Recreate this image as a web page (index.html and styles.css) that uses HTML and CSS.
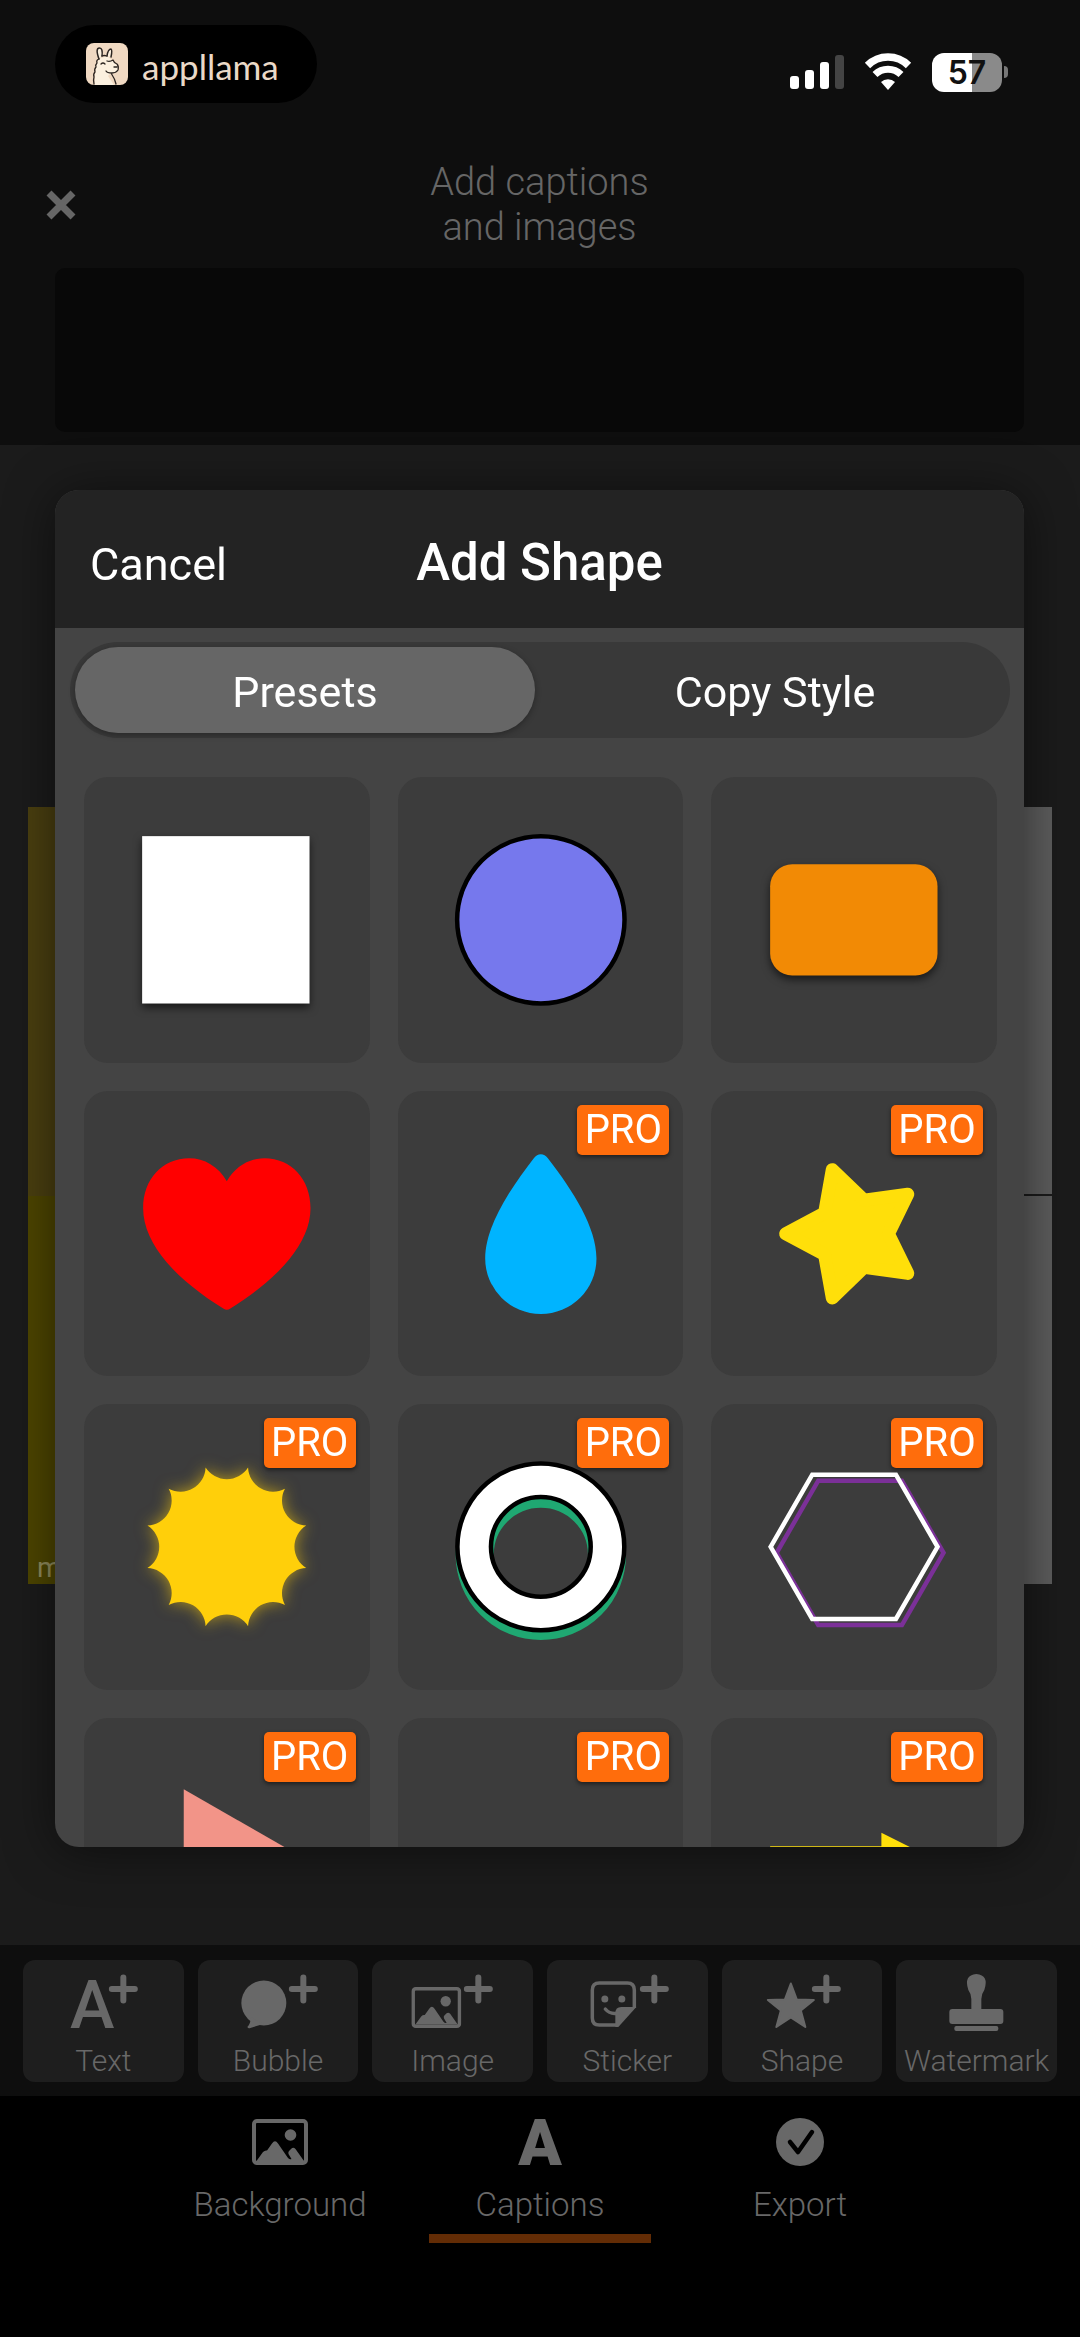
FILE: index.html
```html
<!DOCTYPE html>
<html lang="en">
<head>
    <meta charset="UTF-8">
    <meta name="viewport" content="width=device-width, initial-scale=1.0">
    <title>Add Shape</title>
    <link rel="stylesheet" href="styles.css">
</head>
<body>
    <!-- Shared icons -->
    <svg class="icon-defs" aria-hidden="true">
        <symbol id="plus" viewBox="0 0 30 30">
            <path d="M15 3.500v23M3.500 15h23" stroke="currentColor" stroke-width="6" stroke-linecap="round"/>
        </symbol>
        <symbol id="picture" viewBox="0 0 56 46">
            <rect x="2" y="2" width="52" height="42" rx="3" fill="none" stroke="currentColor" stroke-width="4"/>
            <circle cx="38.500" cy="16" r="5.800" fill="currentColor"/>
            <path d="M4.500 42 11 33q2-2 4-1.500l5-7q3-4.500 6 0L36 39q2 2 3.500 1l-3-5q-.500-2 .500-3l2.500-2.500q2-1.500 4 .500L52 42z" fill="currentColor"/>
        </symbol>
    </svg>

    <div class="app">
        <!-- Top Section -->
        <header class="top">
            <div class="status">
                <div class="pill">
                    <svg class="llama" viewBox="0 0 42 42" aria-hidden="true">
                        <rect width="42" height="42" rx="8" fill="#f0d9c2"/>
                        <path d="M9 42V31l1-6 1-5 2-4 8-3 6 5 5 5q1 6-5 7l-3 1-2 2 6 9z" fill="#fbf0df"/>
                        <path d="M13 16Q9 5 13.500 5 17 5 16 13M21 13q1-7 4-7 1.500 1 0 8" fill="#fbf0df" stroke="#2b2420" stroke-width="1.500" stroke-linecap="round"/>
                        <path d="M13 16q-3 1-2 4-2 2-1 4-2 2-1 5-2 2-1 5-1 3 0 7M16 13q2-1 5 0M21 18q3 1 6-1 1 3 4 4 2 2 1 6-2 3-6 3-5 0-6-2M25 30q4 6 5 11M15 21q2-2 4 0M28 24h3" fill="none" stroke="#2b2420" stroke-width="1.300" stroke-linecap="round" stroke-linejoin="round"/>
                    </svg>
                    <span class="pill-text">appllama</span>
                </div>
                <div class="indicators">
                    <svg class="signal" viewBox="0 0 54 36" aria-hidden="true">
                        <rect x="0" y="22" width="9" height="13" rx="3" fill="#fff"/>
                        <rect x="15" y="16" width="9" height="19" rx="3" fill="#fff"/>
                        <rect x="30" y="8" width="9" height="27" rx="3" fill="#fff"/>
                        <rect x="45" y="1" width="9" height="34" rx="3" fill="#444"/>
                    </svg>
                    <svg class="wifi" viewBox="0 0 48 36" aria-hidden="true">
                        <path d="M3.500 11.500a29 29 0 0 1 41 0" fill="none" stroke="#fff" stroke-width="7.500"/>
                        <path d="M11 20.500a18.500 18.500 0 0 1 26 0" fill="none" stroke="#fff" stroke-width="7"/>
                        <path d="M24 36l-7-8a10 10 0 0 1 14 0z" fill="#fff"/>
                    </svg>
                    <div class="battery"><span class="battery-level">57</span></div>
                </div>
            </div>
            <div class="titlebar">
                <button class="close" aria-label="Close">
                    <svg viewBox="0 0 32 32" aria-hidden="true"><path d="M4 4l24 24M28 4L4 28" stroke="currentColor" stroke-width="7"/></svg>
                </button>
                <h1 class="page-title">Add captions<br>and images</h1>
            </div>
            <div class="ad"></div>
        </header>

        <!-- Meme Canvas -->
        <main class="stage">
            <div class="meme">
                <div class="panel yellow-dark"></div>
                <div class="panel grey"></div>
                <div class="panel yellow">m</div>
                <div class="panel grey"></div>
            </div>
        </main>

        <!-- Caption Tools -->
        <div class="tools">
            <button class="tool">
                <svg viewBox="0 0 160 64" aria-hidden="true">
                    <text x="69" y="61" text-anchor="middle" font-size="67" fill="currentColor">A</text>
                    <use href="#plus" x="85" y="7" width="30" height="30"/>
                </svg>
                <span>Text</span>
            </button>
            <button class="tool">
                <svg viewBox="0 0 160 64" aria-hidden="true">
                    <circle cx="65.500" cy="36" r="22.500" fill="currentColor"/>
                    <path d="M52 50q1 6-3 10 1 2 3 1l13-4z" fill="currentColor"/>
                    <use href="#plus" x="90" y="7" width="30" height="30"/>
                </svg>
                <span>Bubble</span>
            </button>
            <button class="tool">
                <svg viewBox="0 0 160 64" aria-hidden="true">
                    <use href="#picture" x="39" y="20" width="50" height="41"/>
                    <use href="#plus" x="91" y="7" width="30" height="30"/>
                </svg>
                <span>Image</span>
            </button>
            <button class="tool">
                <svg viewBox="0 0 160 64" aria-hidden="true">
                    <path d="M70 58H52q-7 0-7-7V23q0-7 7-7h28q7 0 7 7v18" fill="none" stroke="currentColor" stroke-width="3.500"/>
                    <path d="M68 60V46q0-6 6-6h15L71 60z" fill="currentColor"/>
                    <circle cx="57.500" cy="32" r="3.500" fill="currentColor"/>
                    <circle cx="74.500" cy="32" r="3.500" fill="currentColor"/>
                    <path d="M58 42q5 6 13 4" fill="none" stroke="currentColor" stroke-width="3.500" stroke-linecap="round"/>
                    <use href="#plus" x="92" y="7" width="30" height="30"/>
                </svg>
                <span>Sticker</span>
            </button>
            <button class="tool">
                <svg viewBox="0 0 160 64" aria-hidden="true">
                    <path d="M68.500 16.500 74.500 32.500 91.500 33 78.500 43.500 83 60 68.500 50.500 54 60 58.500 43.500 45.500 33 62.500 32.500z" fill="currentColor" stroke="currentColor" stroke-width="2" stroke-linejoin="round"/>
                    <use href="#plus" x="89" y="7" width="30" height="30"/>
                </svg>
                <span>Shape</span>
            </button>
            <button class="tool">
                <svg viewBox="0 0 160 64" aria-hidden="true">
                    <path d="M75 42V32q0-5-3-9-5-15 8-16 13 1 8 16-3 4-3 9v10h19q3 0 3 3v9q0 3-3 3H56q-3 0-3-3v-9q0-3 3-3z" fill="currentColor"/>
                    <rect x="58" y="59" width="44" height="5" rx="2" fill="currentColor"/>
                </svg>
                <span>Watermark</span>
            </button>
        </div>

        <!-- Bottom Tabs -->
        <nav class="tabs">
            <button class="tab">
                <svg viewBox="0 0 56 48" aria-hidden="true"><use href="#picture" x="0" y="1" width="56" height="46"/></svg>
                <span>Background</span>
            </button>
            <button class="tab active">
                <svg viewBox="0 0 56 48" aria-hidden="true"><text x="28" y="47" text-anchor="middle" font-size="64" font-weight="900" fill="currentColor">A</text></svg>
                <span>Captions</span>
            </button>
            <button class="tab">
                <svg viewBox="0 0 56 48" aria-hidden="true">
                    <circle cx="28" cy="24" r="24" fill="currentColor"/>
                    <path d="M18 24l8 10 14-20" fill="none" stroke="#000" stroke-width="4.500" stroke-linecap="round" stroke-linejoin="round"/>
                </svg>
                <span>Export</span>
            </button>
        </nav>
    </div>

    <!-- Add Shape Dialog -->
    <div class="overlay">
        <div class="dialog" role="dialog" aria-labelledby="dialog-title">
            <div class="dialog-head">
                <button class="cancel">Cancel</button>
                <h2 class="dialog-title" id="dialog-title">Add Shape</h2>
            </div>
            <div class="segments">
                <button class="segment selected">Presets</button>
                <button class="segment">Copy Style</button>
            </div>
            <div class="shapes">
                <button class="shape" aria-label="Square">
                    <svg viewBox="0 0 285 285"><rect class="drop" x="58" y="59" width="167" height="167" fill="#fff"/></svg>
                </button>
                <button class="shape" aria-label="Circle">
                    <svg viewBox="0 0 285 285"><circle cx="142.500" cy="142.500" r="83.500" fill="#7678ed" stroke="#000" stroke-width="4.500"/></svg>
                </button>
                <button class="shape" aria-label="Rounded rectangle">
                    <svg viewBox="0 0 285 285"><rect class="drop" x="59" y="87" width="167" height="111" rx="22" fill="#f28a05"/></svg>
                </button>
                <button class="shape" aria-label="Heart">
                    <svg viewBox="0 0 285 285"><path d="M142.500 90C134 75 120 67 105 67 78 67 59 88 59 117c0 37 36 73 80 100q3.500 2.500 7 0c44-27 80-63 80-100 0-29-19-50-46-50-15 0-29 8-37.500 23z" fill="#f00"/></svg>
                </button>
                <button class="shape" aria-label="Drop">
                    <svg viewBox="0 0 285 285"><path d="M142.500 63q4 0 7 4C175 100 198 136 198 167a55.500 55.500 0 0 1-111 0c0-31 23-67 48.500-100q3-4 7-4z" fill="#00b4ff"/></svg>
                    <span class="pro">PRO</span>
                </button>
                <button class="shape" aria-label="Star">
                    <svg viewBox="0 0 285 285"><path d="M74.500 142.500 113.300 121.800 121 78.500 152.700 109 196.300 103 177 142.500 196.300 182 152.700 176 121 206.500 113.300 163.200z" fill="#ffdf0a" stroke="#ffdf0a" stroke-width="13" stroke-linejoin="round"/></svg>
                    <span class="pro">PRO</span>
                </button>
                <button class="shape" aria-label="Sun">
                    <svg viewBox="0 0 285 285"><path class="glow" d="M163.700 63.300A25 25 0 0 0 200.500 84.500 25 25 0 0 0 221.700 121.300 25 25 0 0 0 221.700 163.700 25 25 0 0 0 200.500 200.500 25 25 0 0 0 163.700 221.700 25 25 0 0 0 121.300 221.700 25 25 0 0 0 84.500 200.500 25 25 0 0 0 63.300 163.700 25 25 0 0 0 63.300 121.300 25 25 0 0 0 84.500 84.500 25 25 0 0 0 121.300 63.300 25 25 0 0 0 163.700 63.300z" fill="#ffcf0a"/></svg>
                    <span class="pro">PRO</span>
                </button>
                <button class="shape" aria-label="Ring">
                    <svg viewBox="0 0 285 285" fill="none">
                        <circle cx="142.500" cy="150.500" r="66" stroke="#1fa872" stroke-width="38"/>
                        <circle cx="142.500" cy="142.500" r="66.500" stroke="#000" stroke-width="38"/>
                        <circle cx="142.500" cy="142.500" r="66.500" stroke="#fff" stroke-width="29"/>
                    </svg>
                    <span class="pro">PRO</span>
                </button>
                <button class="shape" aria-label="Hexagon">
                    <svg viewBox="0 0 285 285" fill="none" stroke-width="4.500">
                        <path d="M65.500 148.500 107 76.500H190.500L232 148.500 190.500 220.500H107z" stroke="#7b3098"/>
                        <path d="M59.500 142.500 101 70.500H184.500L226 142.500 184.500 214.500H101z" stroke="#fff"/>
                    </svg>
                    <span class="pro">PRO</span>
                </button>
                <button class="shape" aria-label="Triangle">
                    <svg viewBox="0 0 285 285"><path d="M99.500 71 224 142.500 99.500 214z" fill="#f29488"/></svg>
                    <span class="pro">PRO</span>
                </button>
                <button class="shape" aria-label="Line">
                    <svg viewBox="0 0 285 285"><path d="M59 142.500H226" stroke="#fff" stroke-width="5"/></svg>
                    <span class="pro">PRO</span>
                </button>
                <button class="shape" aria-label="Arrow">
                    <svg viewBox="0 0 285 285"><path d="M59 128H170V114.500L226 142.500 170 170.500V157H59z" fill="#ffdf0a"/></svg>
                    <span class="pro">PRO</span>
                </button>
            </div>
        </div>
    </div>
</body>
</html>
```
FILE: styles.css
```css
* {
    box-sizing: border-box;
}

body {
    margin: 0;
    font-family: Roboto, "Liberation Sans", sans-serif;
    background-color: #000;
    color: #666;
}

button {
    background: none;
    border: none;
    padding: 0;
    color: inherit;
    font: inherit;
    cursor: pointer;
}

svg {
    display: block;
    overflow: visible;
}

.icon-defs {
    display: none;
}

.app {
    display: flex;
    flex-direction: column;
    min-height: 100vh;
}

/* Top Section */
.top {
    padding: 25px 56px 13px 55px;
    background-color: #0e0e0e;
}

.status {
    display: flex;
    justify-content: space-between;
    padding-right: 16px;
}

.pill {
    display: flex;
    align-items: center;
    gap: 14px;
    height: 78px;
    padding: 0 38px 0 31px;
    border-radius: 39px;
    background-color: #000;
}

.llama {
    width: 42px;
    height: 42px;
}

.pill-text {
    padding-top: 3px;
    font-family: Lato, sans-serif;
    font-size: 35px;
    line-height: 40px;
    color: #ead9c8;
}

.indicators {
    display: flex;
    align-items: center;
    gap: 20px;
    padding-top: 16px;
}

.signal {
    width: 54px;
    height: 36px;
}

.wifi {
    width: 48px;
    height: 36px;
}

.battery {
    display: flex;
    align-items: center;
    gap: 2px;
}

.battery-level {
    width: 70px;
    border-radius: 12px;
    background: linear-gradient(to right, #fff 57%, #8a8a8a 57%);
    color: #111;
    font-family: Inter, sans-serif;
    font-size: 32px;
    font-weight: 600;
    line-height: 39px;
    text-align: center;
}

.battery::after {
    content: "";
    width: 4px;
    height: 12px;
    border-radius: 0 4px 4px 0;
    background-color: #777;
}

.titlebar {
    display: grid;
    grid-template-columns: 1fr auto 1fr;
    align-items: center;
    margin: 57px 0 18px;
}

.close {
    justify-self: start;
    margin-left: -10px;
}

.close svg {
    width: 32px;
    height: 32px;
}

.page-title {
    margin: 0;
    font-size: 38px;
    font-weight: 300;
    line-height: 45px;
    text-align: center;
}

.ad {
    height: 164px;
    border-radius: 10px;
    background-color: #080808;
}

/* Meme Canvas */
.stage {
    display: flex;
    flex: 1;
    align-items: center;
    padding: 0 28px;
    background-color: #1b1b1b;
}

.meme {
    display: grid;
    grid-template-columns: 1fr 1fr;
    grid-template-rows: 1fr 1fr;
    row-gap: 2px;
    width: 100%;
    height: 777px;
}

.panel {
    display: flex;
    align-items: flex-end;
    padding-left: 9px;
    font-size: 28px;
    line-height: 32px;
    color: #8f8a5c;
}

.yellow-dark {
    margin-bottom: -2px;
    background-color: #4a3f10;
}

.yellow {
    background-color: #4d4500;
}

.grey {
    background-color: #5c5c5c;
}

/* Caption Tools */
.tools {
    display: grid;
    grid-template-columns: repeat(6, 1fr);
    gap: 14px;
    padding: 15px 23px 14px;
    background-color: #0e0e0e;
}

.tool {
    padding: 7px 0 3px;
    border-radius: 12px;
    background-color: #1e1e1e;
    color: #686868;
    font-size: 30px;
    font-weight: 300;
    line-height: 36px;
}

.tool svg {
    width: 100%;
    height: 64px;
    margin-bottom: 12px;
    font-weight: 500;
}

/* Bottom Tabs */
.tabs {
    display: flex;
    justify-content: center;
    gap: 38px;
    padding: 22px 0 94px;
    background-color: #000;
}

.tab {
    width: 222px;
    color: #686868;
    border-bottom: 9px solid transparent;
    font-size: 33px;
    font-weight: 300;
    line-height: 38px;
}

.tab svg {
    width: 56px;
    height: 48px;
    margin: 0 auto 20px;
}

.tab span {
    display: block;
    padding-bottom: 10px;
}

.tab.active {
    border-bottom-color: #632c05;
}

/* Add Shape Dialog */
.overlay {
    position: fixed;
    inset: 0;
    display: flex;
    padding: 490px 56px 490px 55px;
}

.dialog {
    display: flex;
    flex: 1;
    flex-direction: column;
    overflow: hidden;
    border-radius: 24px;
    background-color: #444;
    box-shadow: 0 4px 48px rgba(0, 0, 0, 0.5);
    color: #fff;
}

.dialog-head {
    display: grid;
    grid-template-columns: 1fr auto 1fr;
    align-items: baseline;
    padding: 43px 35px 35px;
    background-color: #232323;
}

.cancel {
    justify-self: start;
    font-size: 45px;
}

.dialog-title {
    margin: 0;
    font-size: 51px;
    font-weight: 500;
    line-height: 60px;
}

.segments {
    display: grid;
    grid-template-columns: 1fr 1fr;
    gap: 10px;
    margin: 14px 14px 39px 15px;
    padding: 5px;
    border-radius: 48px;
    background-color: #393939;
}

.segment {
    padding-top: 4px;
    border-radius: 43px;
    font-size: 43px;
    line-height: 82px;
}

.segment.selected {
    background-color: #666;
    box-shadow: 0 2px 6px rgba(0, 0, 0, 0.3);
}

.shapes {
    display: grid;
    grid-template-columns: repeat(3, 1fr);
    gap: 28px;
    flex: 1;
    align-content: start;
    padding: 0 27px 28px 29px;
    overflow-y: auto;
    scrollbar-width: none;
}

.shape {
    position: relative;
    border-radius: 24px;
    background-color: #3c3c3c;
}

.shape svg {
    width: 100%;
}

.drop {
    filter: drop-shadow(0 4px 4px rgba(0, 0, 0, 0.6));
}

.glow {
    filter: drop-shadow(0 0 8px rgba(255, 207, 10, 0.6));
}

.pro {
    position: absolute;
    top: 14px;
    right: 14px;
    width: 92px;
    border-radius: 5px;
    background-color: #ff6d0c;
    box-shadow: 0 2px 4px rgba(0, 0, 0, 0.5);
    color: #fff;
    font-size: 40px;
    line-height: 50px;
    text-align: center;
}
```
